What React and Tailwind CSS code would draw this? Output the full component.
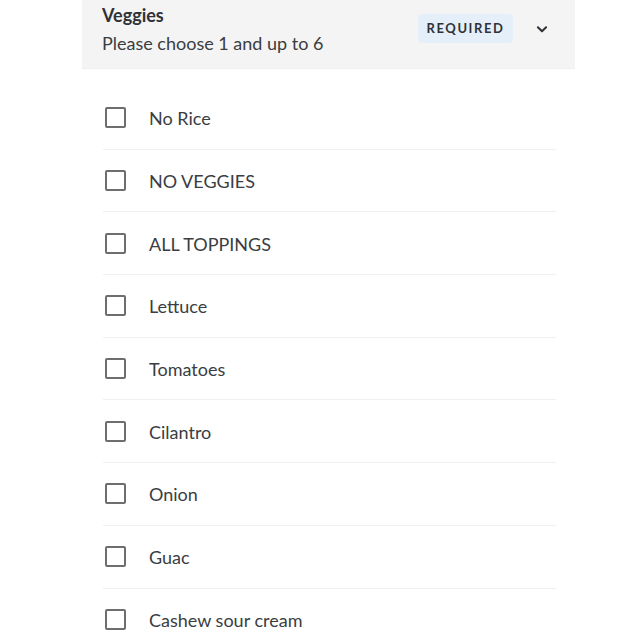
import React from 'react';

const options = [
    'No Rice',
    'NO VEGGIES',
    'ALL TOPPINGS',
    'Lettuce',
    'Tomatoes',
    'Cilantro',
    'Onion',
    'Guac',
    'Cashew sour cream',
];

export default function App() {
    return (
        <div className="w-[640px] h-[640px] overflow-hidden bg-white font-['Lato',sans-serif] text-[#2f3237]">
            <div className="ml-[82px] w-[493px]">
                {/* Header block */}
                <div className="h-[69px] bg-[#f4f4f4] flex items-start justify-between pl-[20px] pr-[26px] border-b border-dotted border-[#ebebeb]">
                    <div className="pt-[4px]">
                        <div className="text-[18px] font-bold leading-[22px]">Veggies</div>
                        <div className="text-[18px] leading-[22px] mt-[6px] text-[#3a3d42]">Please choose 1 and up to 6</div>
                    </div>
                    <div className="flex items-center gap-[22px] pt-[14px]">
                        <span className="h-[29px] w-[95px] flex items-center justify-center bg-[#e5effa] rounded-sm text-[13px] font-bold tracking-[0.12em] text-[#2f3237]">
                            REQUIRED
                        </span>
                        <svg className="w-[14px] h-[14px]" viewBox="0 0 24 24" fill="none" stroke="#2f3237" strokeWidth="3.5" strokeLinecap="round" strokeLinejoin="round">
                            <path d="M5 9l7 7 7-7" />
                        </svg>
                    </div>
                </div>

                {/* Options */}
                <div className="mt-[18px] pl-[21px] pr-[19px]">
                    {options.map((o) => (
                        <label key={o} className="h-[62.7px] flex items-center border-b border-[#f0f0f0] cursor-pointer">
                            <span className="ml-[2px] w-[21px] h-[21px] border-2 border-[#6e6e6e] rounded-[2px] bg-white shrink-0"></span>
                            <span className="ml-[23px] pt-[2px] text-[18px] text-[#3a3d42]">{o}</span>
                        </label>
                    ))}
                </div>
            </div>
        </div>
    );
}
